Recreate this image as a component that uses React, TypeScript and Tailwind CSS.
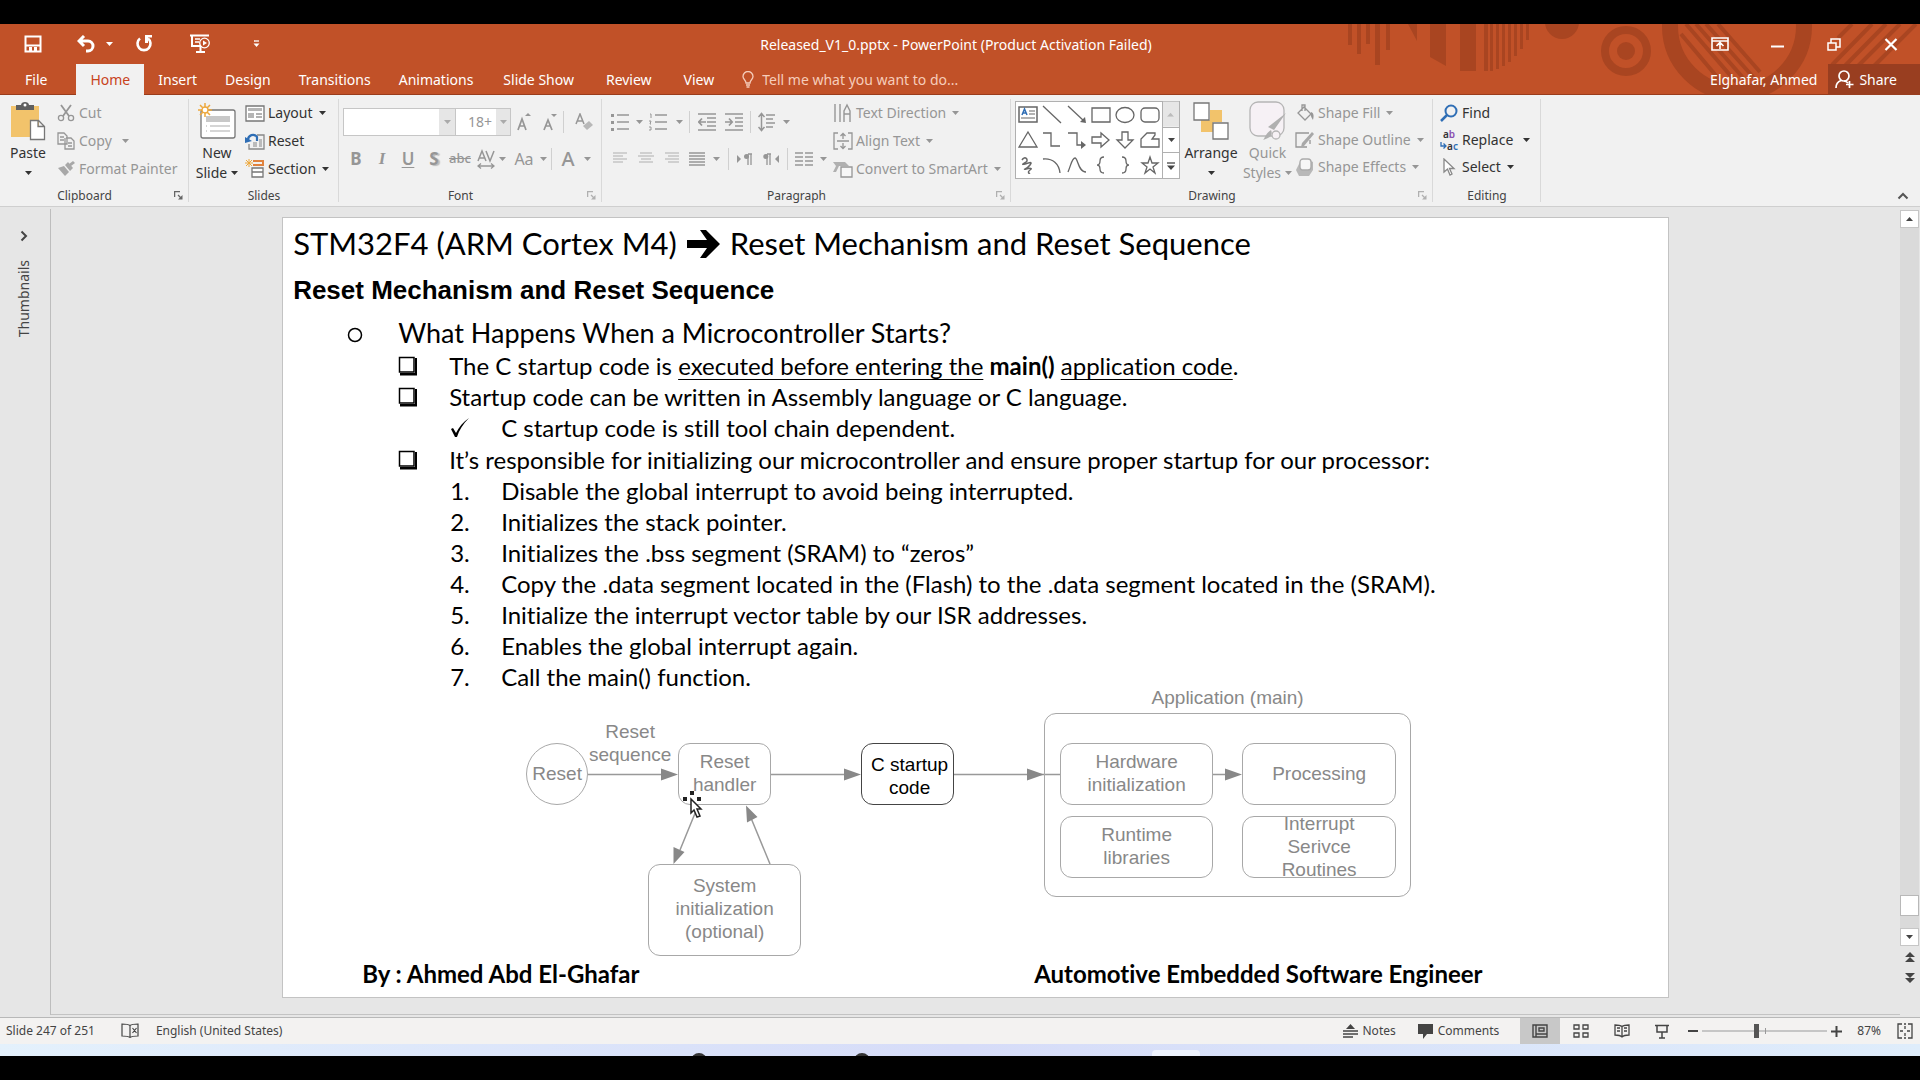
import type { ReactNode } from "react";

const DIM = "text-[#969696]";

function Icon({ w = 20, h = 20, children }: { w?: number; h?: number; children: ReactNode }) {
  return (
    <svg width={w} height={h} viewBox={`0 0 ${w} ${h}`} fill="none" stroke="currentColor" strokeWidth="1.3" className="shrink-0" aria-hidden="true">
      {children}
    </svg>
  );
}

function Caret({ className = "" }: { className?: string }) {
  return (
    <svg width="7" height="4" viewBox="0 0 7 4" className={`shrink-0 ${className}`} aria-hidden="true">
      <path d="M0 0h7L3.5 4z" fill="currentColor" />
    </svg>
  );
}

function Sep() {
  return <span className="h-[22px] w-px shrink-0 bg-[#d0d0d0]" />;
}

function Group({ label, width, launcher, dim, children }: { label: string; width: string; launcher?: boolean; dim?: boolean; children: ReactNode }) {
  return (
    <section aria-label={label} className={`relative flex shrink-0 flex-col pt-1 ${width}`}>
      <div className="flex h-[84px]">{children}</div>
      <div className={`relative flex h-[23px] items-center justify-center pt-0.5 text-xs text-[#444] ${launcher ? "pr-5" : ""}`}>
        {label}
        {launcher && (
          <button aria-label={`${label} settings`} className={`absolute right-1.5 top-2 ${dim ? "text-[#b0b0b0]" : "text-[#666]"}`}>
            <Icon w={9} h={9}>
              <path d="M.6 6V.6H6M4 4l3 3" />
              <path d="M8.5 4v4.5H4z" fill="currentColor" stroke="none" />
            </Icon>
          </button>
        )}
      </div>
      <span className="absolute right-0 top-1 h-[103px] w-px bg-[#d9d9d9]" />
    </section>
  );
}

function Cmd({ icon, label, caret, dim, gap = "ml-1.5" }: { icon: ReactNode; label: string; caret?: boolean; dim?: boolean; gap?: string }) {
  return (
    <button className={`flex h-7 items-center whitespace-nowrap text-sm ${dim ? DIM : "text-[#333]"}`}>
      <span className="mr-[3px] flex w-5 justify-center">{icon}</span>
      {label}
      {caret && <Caret className={gap} />}
    </button>
  );
}

function Tool({ label, w = "w-[26px]", children }: { label: string; w?: string; children: ReactNode }) {
  return (
    <button aria-label={label} className={`flex h-7 shrink-0 items-center justify-center ${w}`}>
      {children}
    </button>
  );
}

/* ---------- title bar ---------- */

function Decoration() {
  const stripes = [0, 1, 2, 3, 4, 5, 6, 7];
  const bottoms = [71, 71, 69, 66, 62, 56, 49, 40];
  return (
    <svg className="absolute right-0 top-0" width="575" height="71" viewBox="1345 24 575 71" fill="#a94521" aria-hidden="true">
      <path d="M1348 24h4v21h-4zM1357 24h4v30h-4zM1366 24h4v20h-4zM1375 24h5v41h-5zM1386 24h4v26h-4zM1408 24h9v17zM1430 24h16v42l-16-9zM1460 24h16v47h-16z" />
      {stripes.map((i) => (
        <rect key={i} x={1484 + i * 6} y="24" width={i === 0 ? 4 : 3} height={bottoms[i] - 24} />
      ))}
      <circle cx="1562" cy="22" r="17" />
      <circle cx="1626" cy="51" r="21" fill="none" stroke="#a94521" strokeWidth="8" />
      <circle cx="1626" cy="51" r="9" />
      <circle cx="1737" cy="26" r="67" fill="none" stroke="#a94521" strokeWidth="16" />
      <g stroke="#a94521" strokeWidth="4" fill="none">
        <path d="M1681 34l42 50M1686 24l50 58M1696 24l49 56M1706 24l48 54M1718 24l42 48" />
        <path d="M1852 24l-14 14M1872 24l-40 41M1886 24l-54 55M1900 24l-46 46M1916 24l-46 46" />
      </g>
    </svg>
  );
}

function TitleBar() {
  return (
    <header className="relative bg-[#c15128] text-white">
      <Decoration />
      <div className="relative grid h-10 grid-cols-[1fr_auto_1fr] items-center text-sm">
        <div className="flex items-center pl-6">
          <button aria-label="Save" className="mr-[35px]">
            <Icon w={18} h={18}>
              <path d="M1.5 1.5h15v15h-15zM2 10.500h14" strokeWidth="2" />
              <path d="M5 12h3v4H5zM10 12h3v4h-3z" fill="currentColor" stroke="none" />
            </Icon>
          </button>
          <button aria-label="Undo" className="mr-2.5">
            <Icon w={19} h={18}>
              <path d="M7 1L2 6l5 5M2 6h9a5 5 0 0 1 0 10H9" strokeWidth="3" />
            </Icon>
          </button>
          <Caret className="mr-[22px]" />
          <button aria-label="Repeat" className="mr-9">
            <Icon w={18} h={18}>
              <path d="M5 3.500a6.500 6.500 0 1 0 8 0" strokeWidth="2.600" />
              <path d="M10 0h7v2.500h-4V8h-3z" fill="currentColor" stroke="none" />
            </Icon>
          </button>
          <button aria-label="Start from beginning" className="mr-[42px]">
            <Icon w={22} h={20}>
              <path d="M1 1.500h19M3 2v10h8M7 18h9M11.500 12v5" strokeWidth="2" />
              <path d="M6 5h5M6 8h4" />
              <circle cx="15.500" cy="9" r="4.800" />
              <path d="M14 6.500l4 2.500-4 2.500z" fill="currentColor" stroke="none" />
            </Icon>
          </button>
          <button aria-label="Customize Quick Access Toolbar">
            <Icon w={7} h={8}>
              <path d="M1 1h5" />
              <path d="M.5 3.500h6l-3 3.500z" fill="currentColor" stroke="none" />
            </Icon>
          </button>
        </div>
        <h1 className="pr-2 pt-0.5">Released_V1_0.pptx - PowerPoint (Product Activation Failed)</h1>
        <div className="flex items-center justify-end pr-[22px]">
          <button aria-label="Ribbon Display Options" className="mr-[42px]">
            <Icon w={18} h={14}>
              <path d="M1 1h16v12H1zM1 4h16M9 12V6M5.500 9L9 5.500 12.500 9" strokeWidth="1.600" />
            </Icon>
          </button>
          <button aria-label="Minimize" className="mr-[43px] pt-1">
            <Icon w={13} h={3}><path d="M0 1.500h13" strokeWidth="2" /></Icon>
          </button>
          <button aria-label="Restore" className="mr-[43px]">
            <Icon w={14} h={13}>
              <path d="M1 5h8v7H1zM4 5V1h9v8H9" strokeWidth="1.500" />
            </Icon>
          </button>
          <button aria-label="Close">
            <Icon w={14} h={13}><path d="M1.500 1l11 11M12.500 1l-11 11" strokeWidth="2.200" /></Icon>
          </button>
        </div>
      </div>
      <nav className="relative flex h-[31px] items-stretch text-sm shadow-[inset_0_-1px_0_#9a3c1c]">
        <button className="pl-[25px] pr-[29px]">File</button>
        <button className="bg-[#f1f1f1] px-[14px] text-[#c8431c]">Home</button>
        {["Insert", "Design", "Transitions", "Animations"].map((t) => (
          <button key={t} className="px-[14px]">{t}</button>
        ))}
        {["Slide Show", "Review", "View"].map((t) => (
          <button key={t} className="px-4">{t}</button>
        ))}
        <label className="flex flex-1 items-center gap-2 pl-3 text-[#f6cdbb]">
          <Icon w={12} h={17}>
            <path d="M4 12C4 9 1 8.500 1 5.500a5 5 0 0 1 10 0C11 8.500 8 9 8 12zM4 14h4M4.500 16h3" />
          </Icon>
          <input type="text" placeholder="Tell me what you want to do..." className="w-60 bg-transparent placeholder:text-[#f6cdbb] outline-none" />
        </label>
        <button className="px-[11px]">Elghafar, Ahmed</button>
        <button className="flex items-center gap-1 bg-[#993e20] pl-[7px] pr-[23px]">
          <Icon w={20} h={19}>
            <circle cx="9" cy="6" r="5" strokeWidth="1.700" />
            <path d="M1 18c0-4 2-6.500 5-7.500M9 11c2 0 3 1 4 2M14.500 11v7M11 14.500h7.500" strokeWidth="1.700" />
          </Icon>
          Share
        </button>
      </nav>
    </header>
  );
}

/* ---------- ribbon ---------- */

function Big({ icon, line1, line2, dim, w }: { icon: ReactNode; line1: string; line2?: string; dim?: boolean; w: string }) {
  return (
    <button className={`flex shrink-0 flex-col items-center text-sm leading-5 ${w} ${dim ? DIM : "text-[#333]"}`}>
      <span className="flex h-[45px] items-center">{icon}</span>
      <span>{line1}</span>
      <span className="flex h-5 items-center gap-1">
        {line2}
        <Caret />
      </span>
    </button>
  );
}

function ClipboardGroup() {
  return (
    <Group label="Clipboard" width="w-[189px]" launcher>
      <Big
        w="w-14"
        line1="Paste"
        icon={
          <Icon w={36} h={40}>
            <path d="M1 5h28v31H1z" fill="#f2c36b" stroke="none" />
            <path d="M6 9V4h5c0-4 8-4 8 0h5v5z" fill="#5f5f5f" stroke="none" />
            <circle cx="15" cy="4" r="1.500" fill="#fff" stroke="none" />
            <path d="M20.500 19.500h8l6 6v13h-14zM28 19.500v6h6" fill="#fff" stroke="#777" />
          </Icon>
        }
      />
      <div className="flex flex-col">
        <Cmd dim label="Cut" icon={
          <Icon w={18} h={18}>
            <path d="M4 1l8 11M14 1L6 12" strokeWidth="1.800" />
            <circle cx="4" cy="14" r="2.600" /><circle cx="14" cy="14" r="2.600" />
          </Icon>
        } />
        <Cmd dim caret gap="ml-2.5" label="Copy" icon={
          <Icon w={18} h={18}>
            <path d="M1 1h6l3 3v8H1zM3 5h4M3 8h4M9 6h5l3 3v8H8V6M11 11h4M11 14h4" />
          </Icon>
        } />
        <Cmd dim label="Format Painter" icon={
          <Icon w={18} h={18}>
            <path d="M1 8l6-2 5 6-4 4zM8 5l3-3 5 6-3 3zM12 4l4-3 2 2-4 3z" fill="#a8a8a8" stroke="none" />
          </Icon>
        } />
      </div>
    </Group>
  );
}

function SlidesGroup() {
  return (
    <Group label="Slides" width="w-[150px]">
      <Big
        w="w-14"
        line1="New"
        line2="Slide"
        icon={
          <Icon w={38} h={36}>
            <rect x="3" y="7" width="34" height="28" rx="2" fill="#fff" stroke="#777" />
            <path d="M8 13h24v6H8z" fill="#c8c8c8" stroke="none" />
            <path d="M12 23h20M12 28h20M8 23h1M8 28h1" stroke="#c8c8c8" />
            <path d="M7 0v14M0 7h14M2 2l10 10M12 2L2 12" stroke="#eda83c" strokeWidth="1.500" />
            <circle cx="7" cy="7" r="3" fill="#fff" stroke="#eda83c" />
          </Icon>
        }
      />
      <div className="flex flex-col">
        <Cmd caret label="Layout" icon={
          <Icon w={20} h={17}>
            <path d="M1 1h18v15H1z" fill="#fff" stroke="#777" />
            <path d="M3 3h14v3H3zM3 8h6v5H3z" fill="#b5b5b5" stroke="none" />
            <path d="M11 9h6M11 12h6" stroke="#999" />
          </Icon>
        } />
        <Cmd label="Reset" icon={
          <Icon w={20} h={18}>
            <path d="M12 3h7v14H4v-5" stroke="#888" />
            <path d="M8 10h4v5H8zM14 7h3v8h-3z" fill="#bbb" stroke="none" />
            <path d="M3 8c0-5 6-7 9-3v4" stroke="#2f6eb5" strokeWidth="2.200" />
            <path d="M0 5l7 4-7 2z" fill="#2f6eb5" stroke="none" />
          </Icon>
        } />
        <Cmd caret label="Section" icon={
          <Icon w={20} h={20}>
            <path d="M8 2h10v4H8" stroke="#e0823d" strokeWidth="2" />
            <path d="M7 9h11v9H7zM7 13h11" fill="#fff" stroke="#777" />
            <path d="M4 0v8M0 4h8M1 1l6 6M7 1L1 7" stroke="#eda83c" strokeWidth="1" />
          </Icon>
        } />
      </div>
    </Group>
  );
}

function FontGroup() {
  return (
    <Group label="Font" width="w-[263px]" launcher dim>
      <div className={`flex flex-col pl-1 pt-2 ${DIM}`}>
        <div className="flex h-[30px] items-center">
          <span className="relative flex h-7 w-[113px]">
            <select aria-label="Font name" className="w-full appearance-none border border-[#c6c6c6] bg-white"><option></option></select>
            <span className="pointer-events-none absolute inset-y-px right-px flex w-4 items-center justify-center bg-[#e6e6e6]"><Caret className="text-[#aaa]" /></span>
          </span>
          <span className="relative flex h-7 w-[55px]">
            <select aria-label="Font size" className="w-full appearance-none border border-l-0 border-[#c6c6c6] bg-white pl-3 text-sm"><option>18+</option></select>
            <span className="pointer-events-none absolute inset-y-px right-px flex w-3.5 items-center justify-center bg-[#e6e6e6]"><Caret className="text-[#aaa]" /></span>
          </span>
          <Tool label="Increase font size">
            <Icon w={16} h={18}><path d="M2 17l4-11 4 11M3.500 13h5" strokeWidth="1.700" /><path d="M9 3l3-3 3 3z" fill="currentColor" stroke="none" /></Icon>
          </Tool>
          <Tool label="Decrease font size">
            <Icon w={16} h={18}><path d="M2 17l4-10 4 10M3.500 13h5" strokeWidth="1.700" /><path d="M9 1l3 3 3-3z" fill="currentColor" stroke="none" /></Icon>
          </Tool>
          <Sep />
          <Tool label="Clear formatting" w="w-10">
            <Icon w={18} h={18}>
              <path d="M1 11L5 1l4 10M2.500 8h5" strokeWidth="1.500" />
              <path d="M8 13l6-5 4 4-6 5z" fill="#b8b8b8" stroke="none" />
            </Icon>
          </Tool>
        </div>
        <div className="mt-2 flex h-7 items-center text-[17px]">
          <Tool label="Bold"><span className="font-bold">B</span></Tool>
          <Tool label="Italic"><span className="font-['Liberation_Serif'] font-bold italic">I</span></Tool>
          <Tool label="Underline"><span className="font-semibold underline underline-offset-2">U</span></Tool>
          <Tool label="Text shadow"><span className="font-bold [text-shadow:2px_1px_1px_#bbb]">S</span></Tool>
          <Tool label="Strikethrough"><span className="text-[13px] font-medium line-through">abc</span></Tool>
          <Tool label="Character spacing">
            <Icon w={18} h={20}>
              <path d="M1 12L5 2l4 10M2.500 9h5M9 2l4 10 4-10" strokeWidth="1.500" />
              <path d="M1 17h16M4 14.500L1 17l3 2.500M14 14.500l3 2.500-3 2.500" />
            </Icon>
          </Tool>
          <Caret className="mr-1.5" />
          <Tool label="Change case" w="w-6"><span className="text-base">Aa</span></Tool>
          <Caret className="mx-1" />
          <Sep />
          <Tool label="Font color" w="w-8"><span className="text-xl font-medium">A</span></Tool>
          <Caret />
        </div>
      </div>
    </Group>
  );
}

function Lines({ rows, w = 18 }: { rows: [number, number][]; w?: number }) {
  return (
    <Icon w={w} h={16}>
      {rows.map(([a, b], i) => (
        <path key={i} d={`M${a} ${i * 3 + 2}H${b}`} strokeWidth="1.500" />
      ))}
    </Icon>
  );
}

function ParagraphGroup() {
  return (
    <Group label="Paragraph" width="w-[409px]" launcher dim>
      <div className={`flex w-[231px] shrink-0 flex-col pl-[5px] pt-2 ${DIM}`}>
        <div className="flex h-[30px] items-center">
          <Tool label="Bullets">
            <Icon w={18} h={18}><path d="M6 2h12M6 9h12M6 16h12" strokeWidth="1.500" /><path d="M0 1h3v3H0zM0 8h3v3H0zM0 15h3v3H0z" fill="currentColor" stroke="none" /></Icon>
          </Tool>
          <Caret className="mx-[3px]" />
          <Tool label="Numbering" w="w-6">
            <Icon w={18} h={18}><path d="M6 2h12M6 9h12M6 16h12" strokeWidth="1.500" /><path d="M1 1h1v4M0 8h2l-1 3h1M0 14h2v3H0" strokeWidth="1" /></Icon>
          </Tool>
          <Caret className="mx-1.5" />
          <Sep />
          <Tool label="Decrease indent" w="w-[34px]"><Icon w={18} h={18}><path d="M0 1h18M9 5h9M9 9h9M9 13h9M0 17h18M8 9H1M4 5.500L.8 9 4 12.500" strokeWidth="1.700" /></Icon></Tool>
          <Tool label="Increase indent" w="w-5"><Icon w={18} h={18}><path d="M0 1h18M10 5h8M10 9h8M10 13h8M0 17h18M0 9h7M4 5.500L7.200 9 4 12.500" strokeWidth="1.700" /></Icon></Tool>
          <span className="ml-1.5 flex"><Sep /></span>
          <Tool label="Line spacing" w="w-8"><Icon w={18} h={20}><path d="M8 3h9M8 7h7M8 11h9M8 15h7M3.500 2v16M.5 5l3-3.500L6.500 5M.5 15l3 3.500 3-3.500" strokeWidth="1.500" /></Icon></Tool>
          <Caret />
        </div>
        <div className="mt-2 flex h-7 items-center">
          <Tool label="Align left"><span className="text-[#c4c4c4]"><Lines rows={[[2, 16], [2, 12], [2, 16], [2, 12]]} /></span></Tool>
          <Tool label="Center"><span className="text-[#c4c4c4]"><Lines rows={[[3, 15], [1, 17], [4, 14], [2, 16]]} /></span></Tool>
          <Tool label="Align right"><span className="text-[#c4c4c4]"><Lines rows={[[2, 16], [5, 16], [2, 16], [5, 16]]} /></span></Tool>
          <Tool label="Justify" w="w-6"><Lines rows={[[1, 17], [1, 17], [1, 17], [1, 17], [1, 17]]} /></Tool>
          <Caret className="ml-1 mr-2" />
          <Sep />
          <Tool label="Left-to-right" w="w-8"><Icon w={16} h={12}><path d="M0 2v8l4-4z" fill="currentColor" stroke="none" /><path d="M11 1v11M14 1v11M15 1h-4" /><circle cx="9.500" cy="3.500" r="2.500" fill="currentColor" stroke="none" /></Icon></Tool>
          <Tool label="Right-to-left" w="w-5"><Icon w={16} h={12}><path d="M16 2v8l-4-4z" fill="currentColor" stroke="none" /><path d="M4 1v11M7 1v11M8 1H4" /><circle cx="2.800" cy="3.500" r="2.500" fill="currentColor" stroke="none" /></Icon></Tool>
          <span className="ml-1.5 flex"><Sep /></span>
          <Tool label="Columns" w="w-8"><Icon w={18} h={16}><path d="M0 2h8M0 6h8M0 10h8M0 14h8M10 2h8M10 6h8M10 10h8M10 14h8" strokeWidth="1.500" /></Icon></Tool>
          <Caret />
        </div>
      </div>
      <div className="flex flex-col">
        <Cmd dim caret label="Text Direction" icon={
          <Icon w={20} h={20}><path d="M2 1v18M7 1v18M11 19V8l3-6 3 6v11M11 11h6" strokeWidth="1.400" /></Icon>
        } />
        <Cmd dim caret label="Align Text" icon={
          <Icon w={20} h={18}><path d="M5 1H1v16h4M15 1h4v16h-4M4 9h12M10 7V2M10 11v5M7.500 4L10 1.500 12.500 4M7.500 14l2.500 2.500 2.500-2.500" /></Icon>
        } />
        <Cmd dim caret label="Convert to SmartArt" icon={
          <Icon w={20} h={18}>
            <path d="M0 2h12l4 4H6l-3 6H0l3-6z" fill="#b0b0b0" stroke="none" />
            <path d="M8 7h11v10H8z" fill="#f7f7f7" />
          </Icon>
        } />
      </div>
    </Group>
  );
}

const shapes: { name: string; art: ReactNode }[] = [
  { name: "Text box", art: <><path d="M1 2h18v15H1z" strokeWidth="1.500" /><path d="M11 6h6M11 9h6M3 13h14" stroke="#999" /><path d="M4 10l2.500-6L9 10M5 8h3" stroke="#2f6eb5" strokeWidth="1.500" /></> },
  { name: "Line", art: <path d="M1 1l18 17" /> },
  { name: "Arrow", art: <><path d="M1 1l16 15" /><path d="M19 18l-6-1 5-5z" fill="currentColor" stroke="none" /></> },
  { name: "Rectangle", art: <path d="M1 3h18v14H1z" /> },
  { name: "Oval", art: <ellipse cx="10" cy="10" rx="9" ry="7.500" /> },
  { name: "Rounded rectangle", art: <rect x="1" y="3" width="18" height="14" rx="4" /> },
  { name: "Triangle", art: <path d="M10 2l9 15H1z" /> },
  { name: "Elbow connector", art: <path d="M1 3h8v13h9" /> },
  { name: "Elbow arrow connector", art: <><path d="M1 3h9v12h6" /><path d="M14 11l5 4-5 4z" fill="currentColor" stroke="none" /></> },
  { name: "Right arrow", art: <path d="M1 7h9V3l8 7-8 7v-4H1z" /> },
  { name: "Down arrow", art: <path d="M7 2h6v8h5l-8 8-8-8h5z" /> },
  { name: "Freeform", art: <path d="M1 17V9l6-6h8v2l-3 4h7v8z" /> },
  { name: "Scribble", art: <path d="M4 5c3-5 7 0 4 2s-5 3-1 2 8-3 5 1-8 5-4 4 7-1 4 1-1 4 0 3" strokeWidth="1.500" /> },
  { name: "Arc", art: <path d="M1 4c10-1 16 5 17 14" /> },
  { name: "Curve", art: <path d="M1 17C4 10 5 3 8 3s3 14 11 14" /> },
  { name: "Left brace", art: <path d="M13 2c-3 0-4 1-4 4 0 2 0 4-3 4 3 0 3 2 3 4 0 3 1 4 4 4" /> },
  { name: "Right brace", art: <path d="M7 2c3 0 4 1 4 4 0 2 0 4 3 4-3 0-3 2-3 4 0 3-1 4-4 4" /> },
  { name: "Star", art: <path d="M10 2l2 6h6l-5 4 2 6-5-4-5 4 2-6-5-4h6z" /> },
];

function DrawingGroup() {
  return (
    <Group label="Drawing" width="w-[422px]" launcher dim>
      <div className="ml-1 mt-0.5 flex h-[78px] w-[165px] shrink-0 border border-[#b0b0b0] bg-white">
        <div className="grid flex-1 grid-cols-6 place-items-center text-[#666]">
          {shapes.map((s) => (
            <button key={s.name} aria-label={s.name}><Icon w={20} h={20}>{s.art}</Icon></button>
          ))}
        </div>
        <div className="flex w-[17px] flex-col border-l border-[#b0b0b0] text-[#444]">
          <button aria-label="Previous shapes" className="flex flex-1 rotate-180 items-center justify-center bg-[#e6e6e6] text-[#bbb]"><Caret /></button>
          <button aria-label="Next shapes" className="flex flex-1 items-center justify-center border-y border-[#b0b0b0]"><Caret /></button>
          <button aria-label="More shapes" className="flex flex-1 items-center justify-center">
            <Icon w={8} h={8}><path d="M0 1h8" /><path d="M0 3.500h8L4 8z" fill="currentColor" stroke="none" /></Icon>
          </button>
        </div>
      </div>
      <Big
        w="w-[62px]"
        line1="Arrange"
        icon={
          <Icon w={36} h={38}>
            <path d="M17 8h12v12H17zM8 18h12v12H8z" fill="#f2c36b" stroke="none" />
            <path d="M1 1h15v17H1zM20 21h15v16H20z" fill="#fff" stroke="#777" />
          </Icon>
        }
      />
      <Big
        dim
        w="w-[51px]"
        line1="Quick"
        line2="Styles"
        icon={
          <Icon w={38} h={40}>
            <rect x="1" y="1" width="34" height="34" rx="8" fill="#f6f1f5" stroke="#b5b5b5" />
            <path d="M37 12L25 29l-6-3zM22 29c2 4 0 8-8 10 2-2 2-6 8-10z" fill="#b0b0b0" stroke="none" />
            <circle cx="27" cy="34" r="4" fill="#f6f1f5" stroke="#b5b5b5" />
          </Icon>
        }
      />
      <div className="ml-0.5 flex flex-col [&>button]:h-[27px]">
        <Cmd dim caret label="Shape Fill" icon={
          <Icon w={20} h={20}><path d="M9 4l7 7-6 6-7-7zM7 8V2h3v6" /><path d="M16 9c3 1 3 4 2 8-1-2-3-4-2-8z" fill="currentColor" stroke="none" /></Icon>
        } />
        <Cmd dim caret label="Shape Outline" icon={
          <Icon w={20} h={18}><path d="M14 2H1v14h11M15 9v4" /><path d="M19 3L9 15l-3 1 1-4L17 1z" fill="#a8a8a8" stroke="none" /></Icon>
        } />
        <Cmd dim caret label="Shape Effects" icon={
          <Icon w={20} h={20}><path d="M1 13l5-10h8l4 2v8l-4 6H4z" fill="#b8b8b8" stroke="none" /><rect x="5" y="2" width="11" height="11" rx="3" fill="#f7f7f7" stroke="#aaa" /></Icon>
        } />
      </div>
    </Group>
  );
}

function EditingGroup() {
  return (
    <Group label="Editing" width="w-[108px]">
      <div className="ml-1.5 flex flex-col [&>button]:h-[27px]">
        <Cmd label="Find" icon={
          <Icon w={18} h={18}><circle cx="11" cy="7" r="5.500" stroke="#2f6eb5" strokeWidth="2" /><path d="M7 11l-6 6" stroke="#2f6eb5" strokeWidth="2.500" /></Icon>
        } />
        <Cmd caret gap="ml-2.5" label="Replace" icon={
          <span className="flex flex-col text-[10px] font-semibold leading-3">
            <span>a<span className="text-[#8a4fb0]">b</span></span>
            <span className="flex items-center">
              <Icon w={7} h={8}><path d="M1 0v4h5M3.500 1.500L6 4 3.500 6.500" stroke="#2f6eb5" /></Icon>
              a<span className="text-[#2f6eb5]">c</span>
            </span>
          </span>
        } />
        <Cmd caret label="Select" icon={
          <Icon w={14} h={18}><path d="M2 1v13l3.500-3 2.500 6 2-1-2.500-5.500H12z" fill="#fff" stroke="#888" /></Icon>
        } />
      </div>
    </Group>
  );
}

function Ribbon() {
  return (
    <div className="flex border-b border-[#cfcfcf] bg-[#f1f1f1]">
      <ClipboardGroup />
      <SlidesGroup />
      <FontGroup />
      <ParagraphGroup />
      <DrawingGroup />
      <EditingGroup />
      <div className="flex flex-1 items-end justify-end pb-1.5 pr-[11px]">
        <button aria-label="Collapse the Ribbon" className="text-[#555]">
          <Icon w={12} h={8}><path d="M1.500 6.500L6 2l4.500 4.500" strokeWidth="2" /></Icon>
        </button>
      </div>
    </div>
  );
}

/* ---------- slide ---------- */

function BoxBullet() {
  return (
    <svg width="20" height="20" viewBox="0 0 20 20" aria-hidden="true">
      <path d="M1.500 1.500h14.500v14.500H1.500z" fill="#fff" stroke="#000" strokeWidth="1.500" />
      <path d="M2 17h15V2h2v17.500H2z" fill="#000" />
    </svg>
  );
}

function CheckBullet() {
  return (
    <svg width="20" height="20" viewBox="0 0 20 20" aria-hidden="true">
      <path d="M1 11l2-1 3 5C9 9 13 4 19 0 13 6 9 12 7 19H5z" fill="#000" />
    </svg>
  );
}

function CircleBullet() {
  return (
    <svg width="16" height="16" viewBox="0 0 16 16" className="mt-1" aria-hidden="true">
      <ellipse cx="8" cy="8" rx="6.500" ry="6.500" fill="none" stroke="#000" strokeWidth="1.500" />
    </svg>
  );
}

function Row({ mark, className = "", children }: { mark: ReactNode; className?: string; children: ReactNode }) {
  return (
    <li className={`flex ${className}`}>
      <span className="flex w-[51px] shrink-0 items-center">{mark}</span>
      <span>{children}</span>
    </li>
  );
}

const steps = [
  "Disable the global interrupt to avoid being interrupted.",
  "Initializes the stack pointer.",
  "Initializes the .bss segment (SRAM) to “zeros”",
  "Copy the .data segment located in the (Flash) to the .data segment located in the (SRAM).",
  "Initialize the interrupt vector table by our ISR addresses.",
  "Enables the global interrupt again.",
  "Call the main() function.",
];

function Node({ pos, dark, children }: { pos: string; dark?: boolean; children: ReactNode }) {
  return (
    <div className={`absolute flex items-center justify-center rounded-xl border-[1.5px] text-center ${pos} ${dark ? "border-[#444] text-black" : "border-[#a8a8a8]"}`}>
      {children}
    </div>
  );
}

function Diagram() {
  return (
    <div className="relative -mt-[9px] ml-px h-[274px] font-['Liberation_Sans',sans-serif] text-[19px] leading-[23px] text-[#888]">
      <svg className="absolute left-0 top-0 overflow-visible" width="1127" height="274" viewBox="284 683 1127 274" aria-hidden="true">
        <g stroke="#999" strokeWidth="1.500">
          <path d="M588 774.500h80M771 774.500h80M954 774.500h106M1213 774.500h20M698 806l-18 44M770 864l-19-46" />
        </g>
        <g fill="#888">
          <path d="M661 768.500l17 6-17 6zM844 768.500l17 6-17 6zM1027 768.500l17 6-17 6zM1225 768.500l17 6-17 6zM673.500 847l11 5-11 12zM746 805.500l1 17 10.500-5.500z" />
        </g>
      </svg>
      <div className="absolute left-[242px] top-[60px] flex size-[62px] items-center justify-center rounded-full border-[1.5px] border-[#a8a8a8] pb-0.5">Reset</div>
      <div className="absolute left-[296px] top-[37px] w-[100px] text-center">Reset<br />sequence</div>
      <Node pos="left-[394px] top-[60px] h-[62px] w-[93px] pb-0.5">Reset<br />handler</Node>
      <Node dark pos="left-[577px] top-[60px] h-[62px] w-[93px] pl-1 pt-1">C startup<br />code</Node>
      <Node pos="left-[364px] top-[181px] h-[92px] w-[153px] pb-1">System<br />initialization<br />(optional)</Node>
      <div className="absolute left-[760px] top-[3px] w-[367px] text-center">Application (main)</div>
      <Node pos="left-[760px] top-[30px] h-[184px] w-[367px]">{null}</Node>
      <Node pos="left-[776px] top-[60px] h-[62px] w-[153px] pb-0.5">Hardware<br />initialization</Node>
      <Node pos="left-[958px] top-[60px] h-[62px] w-[154px] pb-0.5">Processing</Node>
      <Node pos="left-[776px] top-[133px] h-[62px] w-[153px] pb-0.5">Runtime<br />libraries</Node>
      <Node pos="left-[958px] top-[133px] h-[62px] w-[154px] pb-0.5">Interrupt<br />Serivce<br />Routines</Node>
      <svg className="absolute left-[399px] top-[108px]" width="22" height="28" viewBox="0 0 22 28" aria-hidden="true">
        <path d="M7 0h4v4H7zM0 6h4v4H0zM14 6h4v4h-4z" fill="#222" />
        <path d="M8 8v14l3-3 3 7 3-1-3-7h4z" fill="#fff" stroke="#222" strokeWidth="1.500" />
      </svg>
    </div>
  );
}

function Slide() {
  return (
    <article className="w-3/4 border border-[#c3c3c3] bg-white pb-[5px] font-['Lato',sans-serif] text-2xl leading-[31px] text-black [font-variant-ligatures:none]">
      <h2 className="flex items-center gap-2.5 pl-2.5 text-[31px] leading-[51px]">
        STM32F4 (ARM Cortex M4)
        <svg width="33" height="28" viewBox="0 0 33 28" aria-hidden="true">
          <path d="M0 10h20L13 0h6l14 14-14 14h-6l7-10H0z" fill="#000" />
        </svg>
        Reset Mechanism and Reset Sequence
      </h2>
      <h3 className="pl-2.5 font-['Liberation_Sans',sans-serif] text-[26px] font-bold leading-[42px]">Reset Mechanism and Reset Sequence</h3>
      <ul className="pl-16">
        <Row className="mt-[5px] text-[27px] leading-[34px]" mark={<CircleBullet />}>
          What Happens When a Microcontroller Starts?
        </Row>
        <li className="pl-[51px]">
          <ul>
            <Row mark={<BoxBullet />}>
              The C startup code is <u className="decoration-1 underline-offset-4">executed before entering the</u> <b>main()</b>{" "}
              <u className="decoration-1 underline-offset-4">application code</u>.
            </Row>
            <Row mark={<BoxBullet />}>Startup code can be written in Assembly language or C language.</Row>
            <li className="pl-[52px]">
              <ul>
                <Row mark={<CheckBullet />}>C startup code is still tool chain dependent.</Row>
              </ul>
            </li>
            <Row mark={<BoxBullet />} className="mt-px">It’s responsible for initializing our microcontroller and ensure proper startup for our processor:</Row>
            <li className="pl-[52px]">
              <ol>
                {steps.map((s, i) => (
                  <Row key={s} mark={`${i + 1}.`}>{s}</Row>
                ))}
              </ol>
            </li>
          </ul>
        </li>
      </ul>
      <Diagram />
      <div className="grid grid-cols-[672px_1fr] pl-[79px] font-bold leading-[34px]">
        <p>By : Ahmed Abd El-Ghafar</p>
        <p>Automotive Embedded Software Engineer</p>
      </div>
    </article>
  );
}

function Workspace() {
  return (
    <main className="flex flex-1 border-b border-[#b8b8b8] bg-[#e6e6e6]">
      <aside className="mb-0.5 mt-0.5 flex w-[51px] flex-col items-center gap-[18px] border-r border-[#bdbdbd] pr-[3px] pt-[21px] text-[#444]">
        <button aria-label="Expand thumbnails">
          <Icon w={8} h={12}><path d="M1.500 1.500L6 6l-4.500 4.500" strokeWidth="2" /></Icon>
        </button>
        <span className="rotate-180 text-sm leading-5 [writing-mode:vertical-rl]">Thumbnails</span>
      </aside>
      <div className="mb-0.5 flex flex-1 justify-center border-b border-[#c3c3c3] pb-4 pt-2.5">
        <Slide />
      </div>
      <div className="mr-px flex w-[19px] flex-col items-center pt-[3px] text-[#444]">
        <button aria-label="Scroll up" className="flex h-[18px] w-full items-center justify-center border border-[#c6c6c6] bg-white"><Caret className="rotate-180" /></button>
        <div className="flex w-full flex-1 flex-col justify-end bg-[#dadada] pb-3">
          <div className="h-[21px] border border-[#b8b8b8] bg-white" />
        </div>
        <button aria-label="Scroll down" className="flex h-[18px] w-full items-center justify-center border border-[#c6c6c6] bg-white"><Caret /></button>
        <button aria-label="Previous slide" className="mt-1.5"><Icon w={10} h={10}><path d="M0 5l5-5 5 5zM0 10l5-5 5 5z" fill="currentColor" stroke="none" /></Icon></button>
        <button aria-label="Next slide" className="mb-[34px] mt-[11px]"><Icon w={10} h={10}><path d="M0 0l5 5 5-5zM0 5l5 5 5-5z" fill="currentColor" stroke="none" /></Icon></button>
      </div>
    </main>
  );
}

/* ---------- status bar ---------- */

function StatusBar() {
  return (
    <footer className="flex h-[26px] items-stretch bg-[#f3f2f1] text-xs text-[#444]">
      <button className="ml-1.5">Slide 247 of 251</button>
      <button aria-label="Spelling" className="ml-[26px] mr-[17px]">
        <Icon w={18} h={16}><path d="M9 2.500v12M9 2.500C7 1 4 1 1 1v12c3 0 6 0 8 1.500M9 14.500C11 13 14 13 17 13V1c-3 0-6 0-8 1.500M11.500 5l4 5M15.500 5l-4 5" strokeWidth="1.200" /></Icon>
      </button>
      <button>English (United States)</button>
      <div className="flex-1" />
      <button className="mr-[22px] flex items-center gap-[5px]">
        <Icon w={15} h={14}><path d="M0 7h15M0 10h15M0 13h10" /><path d="M3 5l4.500-5L12 5z" fill="currentColor" stroke="none" /></Icon>
        Notes
      </button>
      <button className="mr-[21px] flex items-center gap-[5px]">
        <Icon w={15} h={15}><path d="M0 0h15v10H9l-4 5v-5H0z" fill="currentColor" stroke="none" /></Icon>
        Comments
      </button>
      <button aria-label="Normal view" className="flex w-10 items-center justify-center bg-[#c8c8c8]">
        <Icon w={16} h={14}><path d="M1 1h14v12H1zM4 1v12M4 10h11M7 4h5v3H7z" strokeWidth="1.400" /></Icon>
      </button>
      <button aria-label="Slide sorter" className="flex w-[41px] items-center justify-center">
        <Icon w={16} h={14}><path d="M1 1h5v4H1zM10 1h5v4h-5zM1 9h5v4H1zM10 9h5v4h-5z" /></Icon>
      </button>
      <button aria-label="Reading view" className="flex w-[41px] items-center justify-center">
        <Icon w={16} h={14}><path d="M8 2.500v11M8 2.500C6 1 4 1 1 1v10c3 0 5 0 7 2M8 13c2-2 4-2 7-2V1c-3 0-5 0-7 1.500M3 4h3M3 7h3M10 4h3M10 7h3" /></Icon>
      </button>
      <button aria-label="Slide show" className="flex w-10 items-center justify-center">
        <Icon w={14} h={15}><path d="M0 1.500h14M2 2v6h10V2M7 8v6M4 14h6" strokeWidth="1.500" /></Icon>
      </button>
      <button aria-label="Zoom out" className="ml-1.5"><Icon w={10} h={10}><path d="M0 5h10" strokeWidth="2" /></Icon></button>
      <span className="relative ml-1 flex items-center">
        <input
          type="range"
          aria-label="Zoom"
          min="0"
          max="100"
          defaultValue="43"
          className="h-4 w-[125px] appearance-none bg-transparent [&::-webkit-slider-runnable-track]:h-0.5 [&::-webkit-slider-runnable-track]:bg-[#c6c6c6] [&::-webkit-slider-thumb]:-mt-1.5 [&::-webkit-slider-thumb]:h-3.5 [&::-webkit-slider-thumb]:w-[5px] [&::-webkit-slider-thumb]:appearance-none [&::-webkit-slider-thumb]:bg-[#555]"
        />
        <span className="pointer-events-none absolute left-1/2 h-1.5 w-px bg-[#999]" />
      </span>
      <button aria-label="Zoom in" className="ml-1"><Icon w={11} h={11}><path d="M0 5.500h11M5.500 0v11" strokeWidth="2" /></Icon></button>
      <button className="ml-[15px]">87%</button>
      <button aria-label="Fit slide to window" className="ml-4 mr-[7px]">
        <Icon w={16} h={16}><path d="M5 1H1v14h4M11 1h4v14h-4M7 1h2M7 15h2M8 3v3M8 10v3M3 8h3M10 8h3" /></Icon>
      </button>
    </footer>
  );
}

export default function App() {
  return (
    <div className="flex min-h-screen flex-col bg-black py-6 font-['Noto_Sans',sans-serif] [&_button]:whitespace-nowrap">
      <TitleBar />
      <Ribbon />
      <Workspace />
      <StatusBar />
      <div className="relative h-3 overflow-hidden bg-linear-to-r from-[#e4f1fc] via-[#d6dcf8] to-[#dfedfb]">
        <span className="absolute left-[36%] top-[9px] size-4 rounded-full bg-[#333]" />
        <span className="absolute left-[44.5%] top-[9px] size-4 rounded-full bg-[#333]" />
        <span className="absolute left-[60%] top-1.5 h-4 w-12 rounded bg-[#eef3fd]" />
      </div>
    </div>
  );
}
